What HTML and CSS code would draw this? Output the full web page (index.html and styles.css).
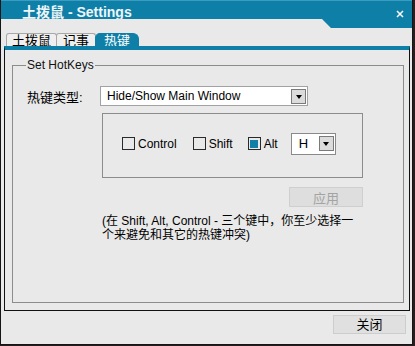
FILE: index.html
```html
<!DOCTYPE html>
<html lang="zh-CN">
<head>
  <meta charset="UTF-8">
  <title>土拨鼠 - Settings</title>
  <link rel="stylesheet" href="styles.css">
</head>
<body>
  <div class="window">
    <div class="titlebar">
      <span class="title">土拨鼠 - Settings</span>
      <svg class="close-x" width="8" height="8" viewBox="0 0 8 8">
        <path d="M1 1 L7 7 M7 1 L1 7" stroke="#ffffff" stroke-width="1.5" fill="none"/>
      </svg>
    </div>

    <!-- 标签页 -->
    <div class="tabs">
      <span class="tab">土拨鼠</span>
      <span class="tab">记事</span>
      <span class="tab active">热键</span>
    </div>

    <div class="pane">
      <fieldset class="group">
        <legend>Set HotKeys</legend>

        <div class="type-row">
          <span class="type-label">热键类型:</span>
          <div class="combo wide">
            <span class="combo-text">Hide/Show Main Window</span>
            <span class="arrow"></span>
          </div>
        </div>

        <div class="keys-box">
          <label class="check"><span class="box"></span>Control</label>
          <label class="check"><span class="box"></span>Shift</label>
          <label class="check"><span class="box checked"></span>Alt</label>
          <div class="combo small">
            <span class="combo-text">H</span>
            <span class="arrow"></span>
          </div>
        </div>

        <div class="apply-row">
          <button class="btn apply" disabled>应用</button>
        </div>

        <p class="note">(在 Shift, Alt, Control - 三个键中，你至少选择一<br>个来避免和其它的热键冲突)</p>
      </fieldset>
    </div>

    <div class="footer">
      <button class="btn close">关闭</button>
    </div>
  </div>
</body>
</html>
```

FILE: styles.css
```css
body {
  margin: 0;
  background-color: #2b1d1f;
  font-family: "Liberation Sans", "Noto Sans CJK SC", sans-serif;
  font-size: 12px;
  color: #000;
}

.window {
  box-sizing: border-box;
  width: 413px;
  height: 345px;
  background-color: #e9e9e9;
  border: 1px solid #151515;
  border-top: none;
  display: flex;
  flex-direction: column;
}

.titlebar {
  height: 28px;
  flex-shrink: 0;
  background-color: #0e80a8;
  border-top: 1px solid #3c9cc0;
  box-sizing: border-box;
  display: flex;
  justify-content: space-between;
  align-items: flex-start;
  padding: 3px 8px 0 21px;
  clip-path: polygon(0 0, 100% 0, 100% 28px, 330px 28px, 321px 19px, 0 19px);
}

.title {
  color: #eef6f9;
  font-weight: bold;
  font-size: 14px;
  line-height: 16px;
}

.close-x {
  margin-top: 6px;
}

/* 标签页 */
.tabs {
  display: flex;
  margin-top: 5px;
  padding-left: 5px;
  height: 13px;
}

.tab {
  box-sizing: border-box;
  height: 14px;
  padding: 0 5px;
  font-size: 13px;
  line-height: 14px;
  background-color: #efefef;
  border: 1px solid #a8a8a8;
  border-bottom: none;
  border-radius: 3px 3px 0 0;
  margin-right: -1px;
}

.tab:nth-child(2) {
  padding: 0 6px;
}

.tab.active {
  background-color: #0e80a8;
  border-color: #0e80a8;
  color: #fff;
  border-radius: 5px 6px 0 0;
  padding: 0 8px;
}

.pane {
  margin: 0 2px 0 3px;
  height: 265px;
  box-sizing: border-box;
  border: 1px solid #111;
  border-top: 4px solid #0e80a8;
  display: flex;
}

.group {
  flex: 1;
  margin: 8px 5px 7px 7px;
  padding: 14px 0 0 14px;
  border: 1px solid #8c8c8c;
  min-width: 0;
}

.group legend {
  padding: 0 1px;
  margin-left: -1px;
  line-height: 14px;
  color: #111;
}

.type-row {
  display: flex;
  align-items: center;
}

.type-label {
  width: 73px;
  font-size: 13px;
}

.combo {
  box-sizing: border-box;
  display: flex;
  align-items: center;
  justify-content: space-between;
  background-color: #fff;
  border: 1px solid #a2a2a2;
  padding: 1px;
}

.combo.wide {
  width: 208px;
  height: 20px;
}

.combo.small {
  width: 45px;
  height: 22px;
  border-color: #8a8a8a;
  padding: 2px 1px 2px 0;
}

.combo-text {
  padding-left: 5px;
}

.combo.small .combo-text {
  padding-left: 7px;
  font-size: 13px;
}

.arrow {
  box-sizing: border-box;
  width: 15px;
  height: 15px;
  background-color: #dcdcdc;
  border: 1px solid #7a7a7a;
  display: flex;
  align-items: center;
  justify-content: center;
}

.arrow::after {
  content: "";
  border-left: 3px solid transparent;
  border-right: 3px solid transparent;
  border-top: 4px solid #000;
  margin-top: 1px;
}

.keys-box {
  box-sizing: border-box;
  width: 261px;
  height: 65px;
  margin: 7px 0 0 75px;
  border: 1px solid #8c8c8c;
  display: flex;
  align-items: center;
  padding: 0 0 4px 19px;
}

.check {
  display: flex;
  align-items: center;
  margin-right: 16px;
  font-size: 12px;
}

.check:nth-child(2) {
  margin-right: 15px;
}

.check:nth-child(3) {
  margin-right: 13px;
}

.box {
  box-sizing: border-box;
  width: 13px;
  height: 13px;
  border: 1px solid #2a2a2a;
  margin-right: 3px;
  display: flex;
  align-items: center;
  justify-content: center;
}

.box.checked::after {
  content: "";
  width: 8px;
  height: 8px;
  background-color: #0e80a8;
}

.apply-row {
  display: flex;
  justify-content: flex-end;
  width: 336px;
  margin-top: 9px;
}

.btn {
  font-family: inherit;
  font-size: 13px;
  box-sizing: border-box;
  padding: 0;
  border-radius: 0;
}

.btn.apply {
  width: 74px;
  height: 20px;
  background-color: #dedede;
  border: 1px solid #cfcfcf;
  color: #a3a3a3;
}

.note {
  margin: 7px 0 0 75px;
  font-size: 12px;
  line-height: 14px;
}

.footer {
  display: flex;
  justify-content: flex-end;
  padding: 4px 6px 0 0;
}

.btn.close {
  width: 73px;
  height: 19px;
  background-color: #e0e0e0;
  border: 1px solid #cdcdcd;
  color: #000;
  line-height: 17px;
}
```
